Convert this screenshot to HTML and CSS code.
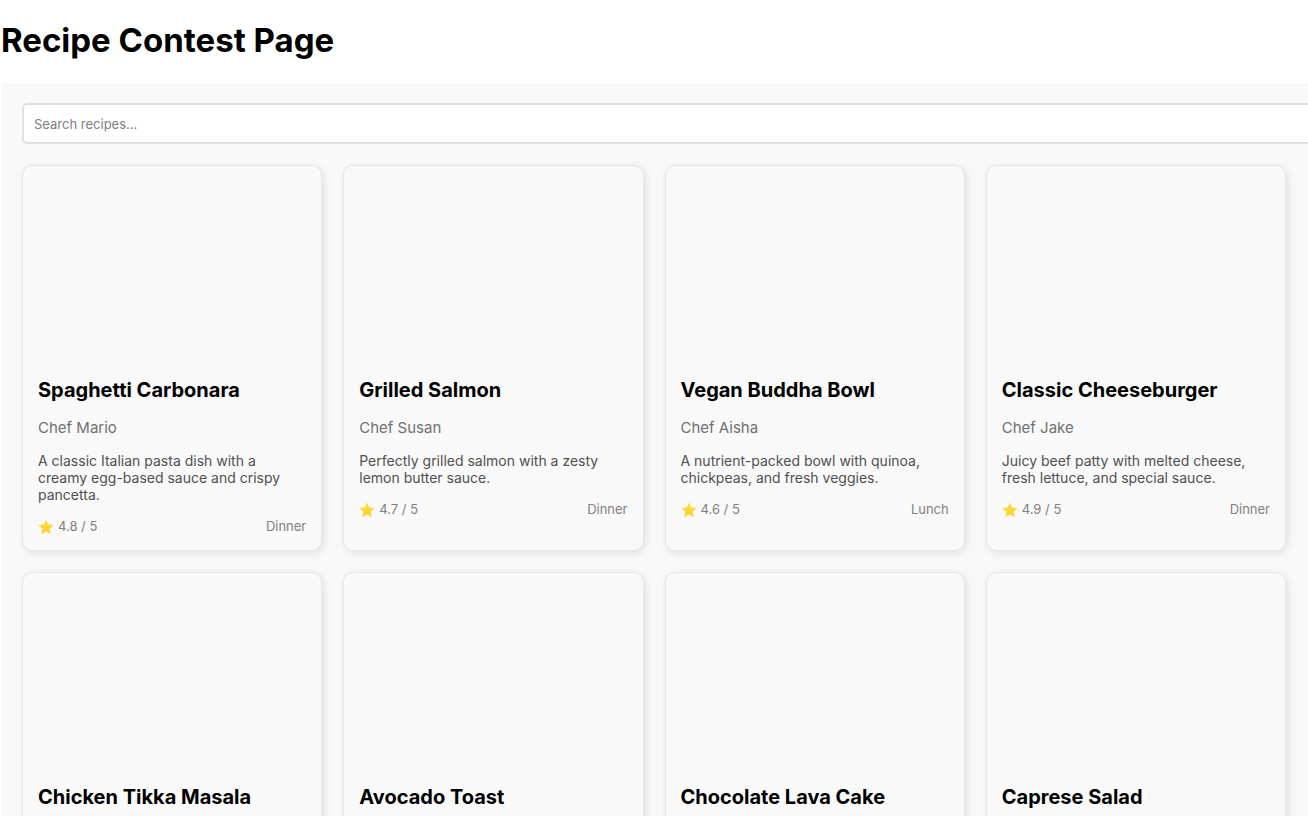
FILE: index.html
```html
<!DOCTYPE html>
<html lang="en">
<head>
<meta charset="utf-8">
<title>Recipe Contest Page</title>
<link rel="stylesheet" href="styles.css">
</head>
<body>
<svg class="sprite" aria-hidden="true">
<defs>
<linearGradient id="gold" x1="0" y1="0" x2="0" y2="1"><stop offset="0" stop-color="#ffe23a"/><stop offset="1" stop-color="#fdc92e"/></linearGradient>
<symbol id="star" viewBox="0 0 24 24"><path fill="url(#gold)" stroke="#fdd835" stroke-width="1" stroke-linejoin="round" d="M12 2l3 6.800 7.600.7-5.800 5 1.800 7.500L12 18l-6.600 4 1.800-7.500-5.800-5 7.600-.7z"/></symbol>
</defs>
</svg>
<h1 class="page-title">Recipe Contest Page</h1>
<main class="contest">
<input class="search" type="text" placeholder="Search recipes..." aria-label="Search recipes">
<div class="recipes">
<article class="card"><div class="photo"></div><div class="info"><h2 class="name">Spaghetti Carbonara</h2><p class="chef">Chef Mario</p><p class="description">A classic Italian pasta dish with a creamy egg-based sauce and crispy pancetta.</p><div class="meta"><span class="rating"><svg class="star"><use href="#star"/></svg>4.8 / 5</span><span>Dinner</span></div></div></article>
<article class="card"><div class="photo"></div><div class="info"><h2 class="name">Grilled Salmon</h2><p class="chef">Chef Susan</p><p class="description">Perfectly grilled salmon with a zesty lemon butter sauce.</p><div class="meta"><span class="rating"><svg class="star"><use href="#star"/></svg>4.7 / 5</span><span>Dinner</span></div></div></article>
<article class="card"><div class="photo"></div><div class="info"><h2 class="name">Vegan Buddha Bowl</h2><p class="chef">Chef Aisha</p><p class="description">A nutrient-packed bowl with quinoa, chickpeas, and fresh veggies.</p><div class="meta"><span class="rating"><svg class="star"><use href="#star"/></svg>4.6 / 5</span><span>Lunch</span></div></div></article>
<article class="card"><div class="photo"></div><div class="info"><h2 class="name">Classic Cheeseburger</h2><p class="chef">Chef Jake</p><p class="description">Juicy beef patty with melted cheese, fresh lettuce, and special sauce.</p><div class="meta"><span class="rating"><svg class="star"><use href="#star"/></svg>4.9 / 5</span><span>Dinner</span></div></div></article>
<article class="card"><div class="photo"></div><div class="info"><h2 class="name">Chicken Tikka Masala</h2></div></article>
<article class="card"><div class="photo"></div><div class="info"><h2 class="name">Avocado Toast</h2></div></article>
<article class="card"><div class="photo"></div><div class="info"><h2 class="name">Chocolate Lava Cake</h2></div></article>
<article class="card"><div class="photo"></div><div class="info"><h2 class="name">Caprese Salad</h2></div></article>
</div>
</main>
</body>
</html>
```
FILE: styles.css
```css
* { box-sizing: border-box; }
body { margin: 0; overflow-x: hidden; background: #fff; color: #000; font-family: Inter, "Liberation Sans", sans-serif; }
.sprite { position: absolute; width: 0; height: 0; }
.page-title { margin: 0; padding: 20px 1px 23px; font-size: 33px; line-height: 40px; font-weight: 700; }
.contest { margin-left: 1px; padding: 20px 22px 21px 21px; background: #f9f9f9; }
.search { display: block; width: calc(100% + 26px); height: 41px; margin-bottom: 21px; padding: 0 10px; border: 2px solid #e0e0e0; border-radius: 5px; background: #fff; font-family: inherit; font-size: 13px; }
.search::placeholder { color: #808080; opacity: 1; }
.recipes { display: grid; grid-template-columns: repeat(4, minmax(0, 1fr)); gap: 21px; }
.card { min-height: 386px; overflow: hidden; border: 1px solid #e6e6e6; border-radius: 10px; background: #f9f9f9; box-shadow: 2px 2px 8px rgba(0, 0, 0, 0.1); }
.photo { height: 197px; }
.info { padding: 15px; }
.name { margin: 0 0 16px; font-size: 20px; line-height: 24px; font-weight: 700; }
.chef { margin: 0 0 14px; font-size: 15px; line-height: 20px; color: #707070; }
.description { margin: 0 0 15px; font-size: 14px; line-height: 17px; color: #505050; }
.meta { display: flex; justify-content: space-between; font-size: 13px; line-height: 17px; color: #808080; }
.rating { display: flex; align-items: center; gap: 4px; }
.star { width: 16px; height: 16px; }
```
